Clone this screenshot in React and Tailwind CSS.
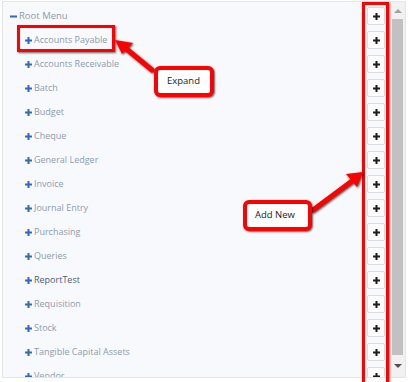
import React from 'react';

const items = [
  'Accounts Payable',
  'Accounts Receivable',
  'Batch',
  'Budget',
  'Cheque',
  'General Ledger',
  'Invoice',
  'Journal Entry',
  'Purchasing',
  'Queries',
  'ReportTest',
  'Requisition',
  'Stock',
  'Tangible Capital Assets',
  'Vendor',
];

function PlusIcon({ className }) {
  return (
    <svg width="7" height="7" viewBox="0 0 7 7" className={className}>
      <rect x="2.5" y="0" width="2" height="7" fill="currentColor" />
      <rect x="0" y="2.5" width="7" height="2" fill="currentColor" />
    </svg>
  );
}

function MinusIcon() {
  return (
    <svg width="7" height="7" viewBox="0 0 7 7" className="text-[#2d6db8]">
      <rect x="0" y="2.5" width="7" height="2" fill="currentColor" />
    </svg>
  );
}

function AddButton() {
  return (
    <div className="w-[18px] h-[18px] bg-white border border-[#dcdcdc] rounded-[2px] flex items-center justify-center text-[#1d1d1d]">
      <PlusIcon />
    </div>
  );
}

function Row({ children, indent }) {
  return (
    <div className="h-[24px] flex items-center justify-between pr-[5px]">
      <div className={`flex items-center gap-[2px] ${indent ? 'pl-[22px]' : 'pl-[7px]'}`}>{children}</div>
      <AddButton />
    </div>
  );
}

export default function App() {
  return (
    <div className="relative w-[410px] h-[382px] bg-white overflow-hidden" style={{ fontFamily: '"Open Sans", sans-serif' }}>
      <div className="ml-[2px] mt-[1px] w-[404px] h-[377px] border border-[#e3e5e9] bg-[#f8f9fd] flex">
        <div className="flex-1 overflow-hidden pt-[2px]">
          <Row>
            <MinusIcon />
            <span className="text-[9.5px] leading-[12px] text-[#8c9bad]">Root Menu</span>
          </Row>
          {items.map((name) => (
            <Row key={name} indent>
              <PlusIcon className="text-[#2d6db8]" />
              <span className={`text-[9px] leading-[12px] ${name === 'ReportTest' ? 'text-[#4a5d75]' : 'text-[#8c9bad]'}`}>{name}</span>
            </Row>
          ))}
        </div>
        <div className="w-[15px] bg-[#f1f1f1] flex flex-col">
          <div className="h-[17px] flex items-center justify-center">
            <div className="w-0 h-0 border-l-[4px] border-r-[4px] border-b-[4px] border-l-transparent border-r-transparent border-b-[#a3a3a3]" />
          </div>
          <div className="flex-1 mx-[2px] bg-[#c1c1c1]" />
          <div className="h-[22px] flex items-center justify-center">
            <div className="w-0 h-0 border-l-[4px] border-r-[4px] border-t-[4px] border-l-transparent border-r-transparent border-t-[#505050]" />
          </div>
        </div>
      </div>

      {/* annotation: accounts payable highlight */}
      <div className="absolute left-[17px] top-[25px] w-[98px] h-[27px] border-[3px] border-[#ff0000] shadow-[1px_1px_2px_rgba(0,0,0,0.6)]" />

      {/* annotation: button column highlight */}
      <div className="absolute left-[362px] top-[2px] w-[27px] h-[385px] border-[3px] border-[#ff0000] shadow-[1px_1px_2px_rgba(0,0,0,0.5)]" />

      {/* arrows */}
      <svg className="absolute left-0 top-0 drop-shadow-[1px_1px_1px_rgba(0,0,0,0.7)]" width="410" height="382">
        <line x1="152" y1="70" x2="124" y2="47" stroke="#ff0000" strokeWidth="5" strokeLinecap="round" />
        <polygon points="115,40 133,43 122,54" fill="#ff0000" />
        <line x1="313" y1="210" x2="352" y2="181" stroke="#ff0000" strokeWidth="5" strokeLinecap="round" />
        <polygon points="363,172 346,174 357,187" fill="#ff0000" />
      </svg>

      {/* callouts */}
      <div className="absolute left-[154px] top-[66px] w-[60px] h-[31px] bg-white border-[4px] border-[#ff0000] rounded-[6px] shadow-[1px_1px_2px_rgba(0,0,0,0.6)] flex items-center pl-[9px]">
        <span className="text-[9.5px] font-medium text-[#1a1a1a]">Expand</span>
      </div>
      <div className="absolute left-[243px] top-[200px] w-[69px] h-[31px] bg-white border-[4px] border-[#ff0000] rounded-[6px] shadow-[1px_1px_2px_rgba(0,0,0,0.6)] flex items-center pl-[8px]">
        <span className="text-[9.5px] font-medium text-[#1a1a1a]">Add New</span>
      </div>
    </div>
  );
}
